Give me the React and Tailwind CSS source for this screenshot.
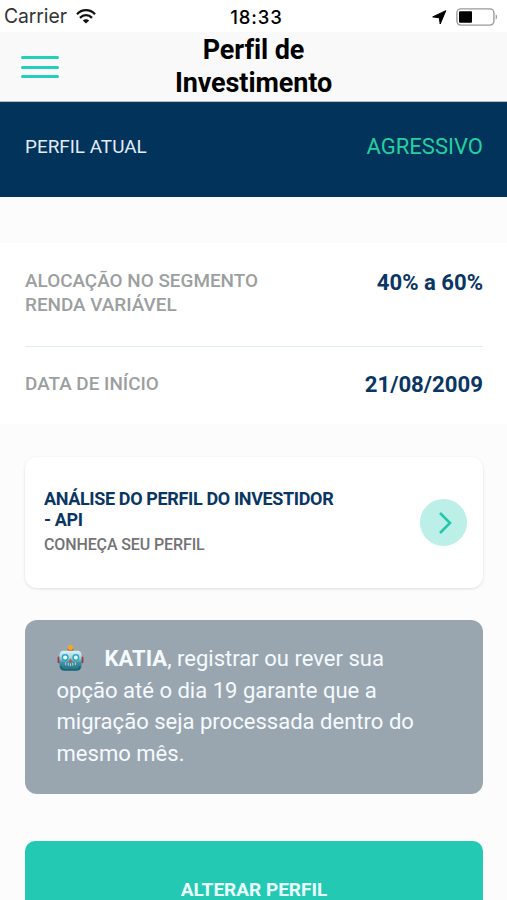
import React from 'react';

function WifiIcon() {
  return (
    <svg width="20" height="16" viewBox="0 0 20 16" fill="none" stroke="#111" strokeWidth="2.3">
      <path d="M1 6.2C3.400 3.600 6.500 2.200 10 2.200S16.600 3.600 19 6.200" />
      <path d="M4 9.900C5.700 8.100 7.700 7.100 10 7.100S14.300 8.100 16 9.900" />
      <path d="M6.800 12.400C8.600 10.700 11.400 10.700 13.200 12.400L10 15.600Z" fill="#111" stroke="none" />
    </svg>
  );
}

function LocationIcon() {
  return (
    <svg width="15" height="15" viewBox="0 0 15 15" fill="#000">
      <path d="M13.800 0.700L8.200 14L7.300 7.800L0.700 6.900Z" stroke="#000" strokeWidth="1" strokeLinejoin="round" />
    </svg>
  );
}

function BatteryIcon() {
  return (
    <svg width="42" height="18" viewBox="0 0 42 18">
      <rect x="0.900" y="0.900" width="37" height="16.200" rx="4" fill="#fff" stroke="#9a9a9a" strokeWidth="1.400" />
      <rect x="3" y="3.200" width="13" height="11.600" rx="1" fill="#000" />
      <path d="M39.700 6.300C41.500 7.200 41.500 10.800 39.700 11.700Z" fill="#9a9a9a" />
    </svg>
  );
}

function RobotIcon() {
  return (
    <svg className="inline-block align-[-6px]" width="27" height="28" viewBox="0 0 28 28">
      <defs>
        <linearGradient id="robot-face" x1="0" y1="0" x2="0" y2="1">
          <stop offset="0" stopColor="#dcf3f3" />
          <stop offset="0.350" stopColor="#a3d5da" />
          <stop offset="0.600" stopColor="#3f93a3" />
          <stop offset="1" stopColor="#1f6d80" />
        </linearGradient>
      </defs>
      <rect x="0.600" y="12.500" width="2.800" height="7" rx="1.200" fill="#9c3b43" />
      <rect x="24.600" y="12.500" width="2.800" height="7" rx="1.200" fill="#9c3b43" />
      <rect x="11" y="4" width="6" height="3.500" rx="1" fill="#a8574c" />
      <circle cx="14" cy="3" r="2.700" fill="#f5a623" />
      <path d="M6 6.500H22Q25.500 7 25.500 12V21Q25.500 27 21 27H7Q2.500 27 2.500 21V12Q2.500 7 6 6.500Z" fill="url(#robot-face)" />
      <path d="M4 22.500Q4.500 26.300 8 26.300H20Q23.500 26.300 24 22.500" fill="none" stroke="#165f72" strokeWidth="1.300" />
      <circle cx="8.500" cy="13.500" r="3.600" fill="#2ba6cb" />
      <circle cx="8.500" cy="13.500" r="2.100" fill="#e8ffff" />
      <circle cx="19.500" cy="13.500" r="3.600" fill="#2ba6cb" />
      <circle cx="19.500" cy="13.500" r="2.100" fill="#e8ffff" />
      <path d="M14 14.500L16 18.300H12Z" fill="#d5453f" />
      <path d="M9 18.500V21.500M11.700 19V22M14 19.500V22.500M16.300 19V22M19 18.500V21.500" stroke="#cfdcdc" strokeWidth="0.900" />
    </svg>
  );
}

function StatusBar() {
  return (
    <div className="grid h-8 grid-cols-[1fr_auto_1fr] items-center bg-white pl-[4px] pr-[9px] font-[Inter,sans-serif]">
      <div className="flex items-center gap-[9px]">
        <span className="text-[19.4px] leading-8 tracking-[-0.1px] text-[#333]">Carrier</span>
        <WifiIcon />
      </div>
      <span className="pl-[11px] pt-[3px] text-center text-[18.5px] font-medium leading-[29px] tracking-[0.9px] text-black">18:33</span>
      <div className="flex items-center justify-end gap-[9px] pt-[2px]">
        <LocationIcon />
        <BatteryIcon />
      </div>
    </div>
  );
}

function Header() {
  return (
    <header className="grid h-[70px] grid-cols-[1fr_auto_1fr] items-center border-b border-[#b5bcc4] bg-[#f9f9f9] px-[21px]">
      <button className="flex w-[38px] flex-col gap-[6.3px] pt-[1px]" aria-label="Menu">
        <span className="h-[3px] rounded-full bg-[#24cfbc]" />
        <span className="h-[3px] rounded-full bg-[#24cfbc]" />
        <span className="h-[3px] rounded-full bg-[#24cfbc]" />
      </button>
      <h1 className="text-center text-[27px] font-bold leading-[33px] tracking-[-0.1px] text-black">
        Perfil de
        <br />
        Investimento
      </h1>
      <span />
    </header>
  );
}

export default function App() {
  return (
    <div className="h-[900px] w-[507px] overflow-hidden bg-[#fcfcfc] font-[Roboto,sans-serif]">
      <StatusBar />
      <Header />

      <section className="flex h-[95px] items-start justify-between bg-[#01335b] pl-[25px] pr-6 pt-[29px]">
        <span className="text-[18.9px] leading-8 text-[#e3ecf7]">PERFIL ATUAL</span>
        <span className="text-[22px] leading-8 text-[#26cf9f]">AGRESSIVO</span>
      </section>

      <section className="mt-[46px] h-[181px] bg-white pl-[25px] pr-6 pt-[26px]">
        <div className="flex h-[78px] items-start justify-between border-b border-[#dfeeef]">
          <p className="text-[18.9px] font-medium leading-6 text-[#9c9f9f]">
            ALOCAÇÃO NO SEGMENTO
            <br />
            RENDA VARIÁVEL
          </p>
          <span className="text-[22.1px] font-bold leading-[26px] text-[#0a3663]">40% a 60%</span>
        </div>
        <div className="flex items-start justify-between pt-6">
          <span className="text-[18.9px] font-medium leading-[26px] text-[#9c9f9f]">DATA DE INÍCIO</span>
          <span className="text-[22.2px] font-bold leading-[26px] text-[#0a3663]">21/08/2009</span>
        </div>
      </section>

      <main className="pl-[25px] pr-6 pt-[33px]">
        <div className="flex h-[131px] items-center justify-between rounded-xl bg-white pl-[19px] pr-4 shadow-[0_1px_3px_rgba(0,0,0,0.12)]">
          <div className="pb-px">
            <p className="text-[18px] font-bold leading-[21px] tracking-[-0.36px] text-[#0a3663]">
              ANÁLISE DO PERFIL DO INVESTIDOR
              <br />- API
            </p>
            <p className="mt-[4px] text-[16px] font-medium leading-[22px] tracking-[-0.12px] text-[#737373]">CONHEÇA SEU PERFIL</p>
          </div>
          <span className="flex size-[47px] items-center justify-center rounded-full bg-[#bbefe7]">
            <svg className="ml-[3px]" width="14" height="24" viewBox="0 0 14 24" fill="none" stroke="#21c8ac" strokeWidth="2.600">
              <path d="M2 2L12 12L2 22" />
            </svg>
          </span>
        </div>

        <div className="mt-8 h-[174px] rounded-xl bg-[#9aa6af] pl-[31.5px] pt-[23px] text-[22.05px] leading-[31.6px] text-[#f5faff]">
          <RobotIcon />
          <strong className="ml-[21px] font-bold">KATIA</strong>, registrar ou rever sua
          <br />
          opção até o dia 19 garante que a
          <br />
          migração seja processada dentro do
          <br />
          mesmo mês.
        </div>

        <button className="mt-[47px] flex h-[98px] w-full items-center justify-center rounded-[10px] bg-[#24c9b3] text-[19px] font-bold text-[#eafffb]">
          ALTERAR PERFIL
        </button>
      </main>
    </div>
  );
}
